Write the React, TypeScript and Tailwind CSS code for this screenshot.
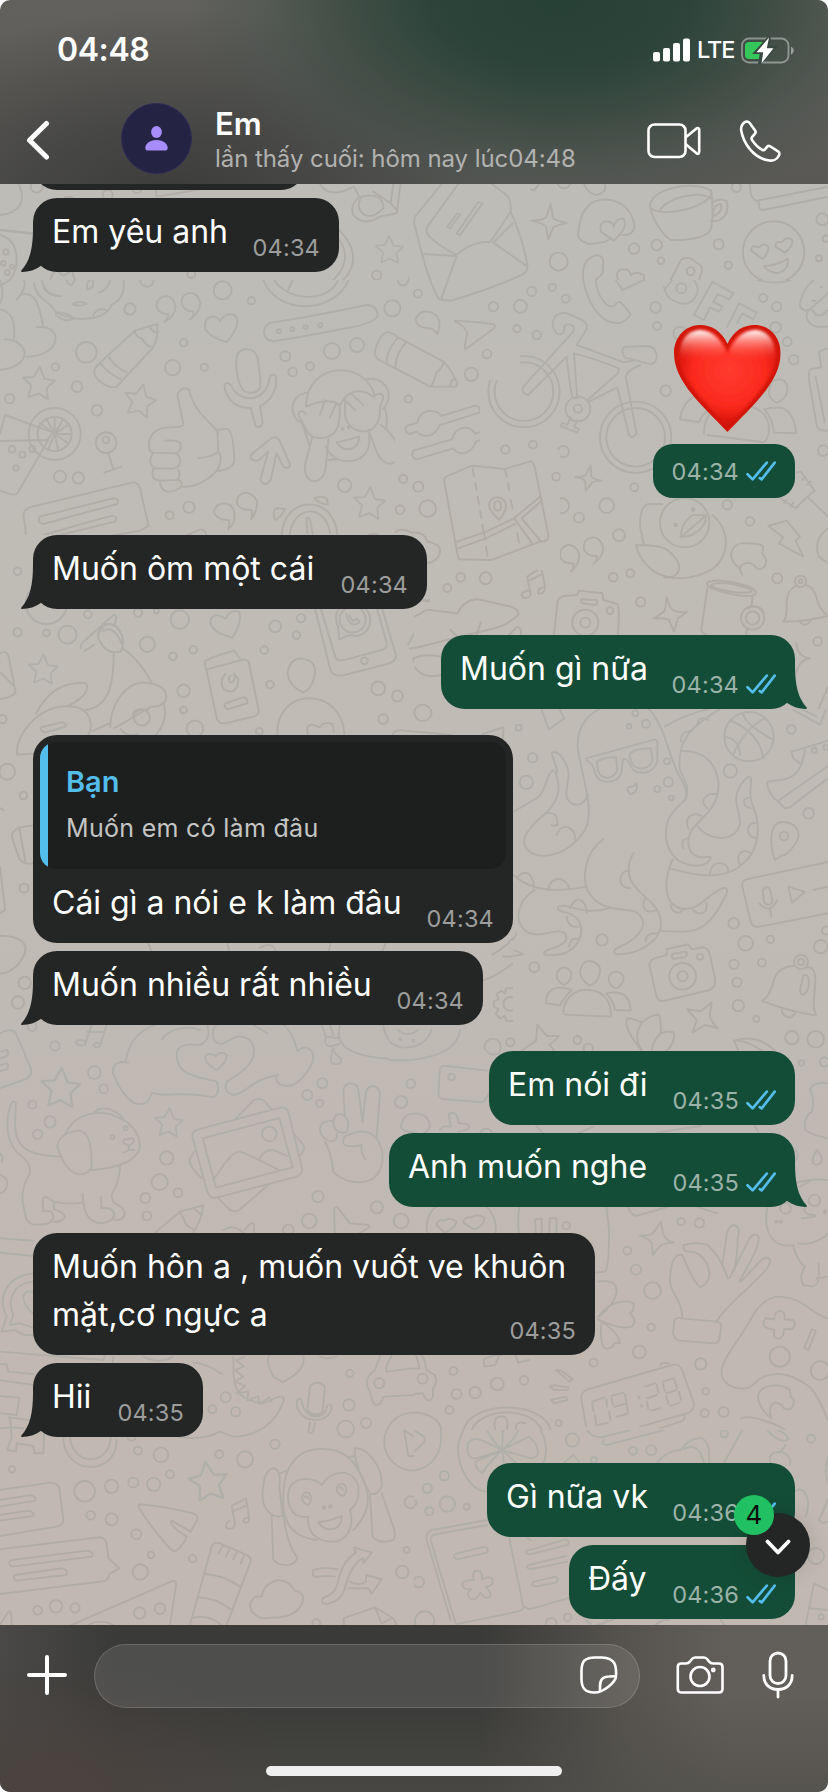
import React from "react";
import clsx from "clsx";

type Dot = [number, number, number];

// Each patch of the wallpaper has its own origin and is drawn at triple size
type Patch = {
  id: string;
  transform: string;
  dots: Dot[];
  stars?: [number, number, number, number][];
  paths: string[];
};

const STAR = "M0 -50 L15 -17 Q17 -14 21 -14 L48 -12 L25 12 L31 46 L2 30 L-28 44 L-22 8 L-48 -14 L-16 -18 Z";

const patches: Patch[] = [
  {
    id: "top-left",
    transform: "translate(0 0) scale(.3333)",
    dots: [
      [110, 560, 18], [323, 585, 15], [411, 568, 12], [1130, 826, 14], [18, 756, 8], [10, 790, 7],
      [36, 800, 6], [22, 818, 7], [574, 822, 12],
    ],
    stars: [[1168, 750, 0.85, 0]],
    paths: [
      "M55 550 C80 600 62 640 0 645", "M0 690 L100 700 M0 705 C60 720 60 800 30 840", "M130 705 L0 690",
      "M150 840 Q165 800 180 820 Q190 835 215 810 L225 840",
      "M465 552 L470 590 L700 552 M195 592 L210 590 L220 594",
      "M960 552 Q985 592 1040 570 L1062 560 L1078 590 Q1046 620 1062 648 Q1095 680 1140 650 L1190 640 L1202 552",
      "M1085 590 Q1065 620 1090 642 Q1115 660 1150 625 Q1150 575 1085 590 M1180 552 L1172 610 L1120 575 M1172 610 L1190 630",
      "M1018 690 Q1095 770 1030 840 M1018 720 Q1060 780 1000 840",
    ],
  },
  {
    id: "top-right",
    transform: "translate(414 0) scale(.3333)",
    dots: [
      [967, 562, 14], [1225, 658, 18], [1236, 716, 10], [1215, 775, 9], [943, 796, 11], [914, 733, 15],
      [728, 735, 16], [741, 782, 10], [660, 746, 16], [434, 785, 27], [830, 814, 12], [450, 545, 20],
      [1079, 756, 92],
    ],
    paths: [
      "M410 612 L418 655 Q422 660 458 669 Q422 678 418 682 L403 718 L396 680 Q390 670 353 662 Q390 660 396 652 Z",
      "M510 552 Q520 580 548 585 Q582 575 572 552 M305 552 L360 572 L374 555",
      "M520 730 Q485 720 494 690 Q502 600 576 598 Q650 605 662 680 Q655 708 625 705 M520 732 Q580 730 590 714",
      "M600 722 L562 696 Q552 665 580 664 Q595 665 600 680 Q605 655 628 656 Q646 680 600 722",
      "M708 615 C715 560 860 540 892 575 C900 620 730 660 708 620 C715 660 750 710 770 720 C830 722 880 710 890 690 Q900 650 892 570",
      "M735 635 C760 590 860 570 890 595 M894 610 Q915 592 938 603 Q950 650 905 664 L890 662 M897 650 Q895 615 920 612 Q930 635 897 650",
      "M1008 552 Q1008 600 1030 602 L1242 560 M1033 602 L1037 625 Q1040 632 1060 628 L1242 590",
      "M1045 777 L1012 752 Q1010 732 1035 742 Q1050 725 1064 742 Q1062 765 1045 777 M1112 758 L1085 740 Q1082 722 1104 727 Q1115 708 1134 718 Q1140 738 1112 758 M1050 798 Q1085 798 1122 776 Q1125 812 1090 820 Q1060 815 1050 798",
      "M508 840 Q500 780 545 766 Q570 765 568 790 L566 820 L545 840 M612 840 Q600 805 635 808 Q650 812 650 826 Q665 810 690 826 L690 840",
      "M770 840 L800 782 Q812 768 830 776 L858 795 Q870 805 860 825 L855 840",
      "M330 800 Q350 790 336 810 L230 870",
    ],
  },
  {
    id: "left",
    transform: "translate(0 280) scale(.3333)",
    dots: [
      [390, 87, 17], [259, 217, 31], [166, 261, 11], [231, 320, 16], [29, 356, 14], [291, 391, 16],
      [551, 188, 11], [518, 263, 23], [613, 262, 11], [668, 31, 27], [754, 62, 11], [1177, 85, 24],
      [856, 229, 15], [878, 276, 13], [930, 259, 12], [996, 213, 24], [1071, 195, 21], [164, 462, 78],
      [164, 462, 51], [318, 488, 31], [318, 480, 10], [180, 590, 18], [235, 594, 17], [36, 508, 10],
      [67, 524, 9], [97, 507, 9], [48, 564, 8], [509, 706, 12], [567, 682, 17], [1034, 616, 20],
      [1210, 597, 13], [1201, 690, 13], [1225, 357, 13], [441, 0, 20], [837, 154, 6], [877, 148, 6],
      [917, 142, 6], [961, 135, 6], [1210, 2, 15], [1028, 446, 3], [1046, 442, 3],
    ],
    stars: [[116, 310, 1, 4], [420, 362, 1, 12], [1108, 670, 0.98, 4]],
    paths: [
      "M102 10 C110 60 150 60 168 98 Q240 130 300 108 Q330 95 334 74 C370 60 372 30 372 0",
      "M125 0 C135 35 150 45 183 49 Q150 50 130 25 M200 0 Q210 30 225 0 M262 28 Q258 5 270 0 M262 28 Q285 25 278 0 M295 38 Q325 30 330 0 M217 72 Q240 60 260 72 Q240 82 217 72 M168 98 Q200 95 222 115 Q195 130 168 105 M280 105 Q295 80 322 92",
      "M50 58 C70 40 80 10 70 0 M65 44 C110 30 120 90 130 140 M110 142 C190 130 190 230 78 230 M0 88 C40 95 45 130 42 178 M15 178 C90 180 100 260 0 270",
      "M0 0 Q15 40 0 70 M0 18 Q20 5 30 0",
      "M283 280 Q282 262 300 248 L405 152 L445 140 L472 132 Q475 180 458 204 L352 318 Q330 330 295 300 Q283 288 283 280",
      "M302 252 Q330 285 362 297 M327 232 Q345 262 380 277 M403 153 Q412 175 425 174 Q435 196 458 203 M448 138 Q458 160 470 155",
      "M493 126 Q525 110 527 80 Q522 48 496 48 Q468 54 470 80 Q478 104 504 102 Q505 115 493 126 M570 118 Q598 100 601 70 Q595 38 570 38 Q542 45 545 70 Q552 96 580 94 Q582 108 570 118",
      "M680 186 Q635 175 616 148 Q610 110 640 110 Q655 112 660 124 Q675 95 704 105 Q728 130 680 186",
      "M790 0 C830 105 1000 105 1046 0 M822 0 C870 70 990 65 1014 0 M862 36 L878 0",
      "M815 128 Q945 108 1100 75 Q1132 75 1133 108 Q1125 132 1010 150 Q900 172 820 184 Q790 180 792 150 Q798 132 815 128",
      "M1242 188 L1170 158 Q1150 150 1135 185 Q1115 225 1135 238 L1242 296 M1195 172 Q1160 210 1160 248 M1220 186 Q1185 225 1186 260",
      "M710 235 C710 200 765 195 773 235 C780 280 785 310 780 325 Q765 345 735 335 C715 320 705 265 710 235",
      "M673 318 Q680 300 695 318 C715 370 800 370 808 295 Q815 275 828 290 C835 340 800 370 780 378 L788 430 Q782 445 768 440 L752 384 C715 385 680 365 673 318",
      "M918 380 C920 240 1100 240 1125 350 M1095 298 C1150 285 1190 340 1150 386 M920 338 C870 345 860 410 910 432 M918 380 Q985 350 1020 375 Q1045 330 1078 334 Q1100 335 1120 350 Q1145 332 1150 352 L1140 385 C1145 480 1040 470 1035 400 L1035 355",
      "M918 402 Q900 382 895 405 L915 440 C930 495 1010 480 1016 430 Q1022 390 1018 375 M975 360 L960 405 M1008 372 L990 412 M1052 340 L1090 375 M1040 365 L1065 390",
      "M937 472 L915 555 C910 620 975 620 978 555 L985 478 M978 500 C1000 560 1100 560 1108 490 L1108 450 M1140 434 C1180 460 1210 510 1192 540 Q1160 570 1132 520 L1105 450 M1010 488 L1078 470 Q1075 510 1035 508 Q1018 500 1010 488 M908 435 L928 495 M985 540 L1010 538 M1155 385 Q1165 420 1158 448",
      "M550 430 L532 345 Q545 315 568 330 C580 400 650 440 655 460 M550 435 Q545 442 500 443 C460 445 445 475 447 495 Q445 515 460 518 M495 482 Q545 480 542 495 Q545 515 525 520 L460 518 Q440 550 465 565 L520 566 Q545 560 540 535 Q535 520 520 520 M460 565 Q450 600 480 602 L530 600 Q545 590 535 570 M480 602 Q480 635 510 635 Q545 630 546 610 Q540 598 530 600 M546 620 C590 625 640 590 655 565 Q670 530 655 515 M595 535 Q640 530 655 515 L652 455 M652 450 L680 446 Q700 448 703 540 Q703 565 655 573",
      "M752 525 Q750 545 775 542 L805 515 L782 595 Q780 612 800 612 L812 600 L830 520 L850 560 Q870 570 870 552 L838 480 Q825 465 810 478 Z",
      "M15 405 L160 458 L140 480 L0 483 M15 405 L0 460 M145 480 L52 640 Q45 650 0 632 M164 462 L164 412 M164 462 L140 418 M164 462 L120 430 M164 462 L190 418 M164 462 L208 432 M164 462 L212 462 M164 462 L205 490 M164 462 L175 510 M164 462 L145 508",
      "M325 520 L340 568 M313 578 L365 560",
      "M75 780 Q80 750 72 720 Q65 690 90 682 L395 608 Q415 605 420 625 L446 738 L420 752 L270 780 M120 710 L340 655 Q360 655 352 672 L130 732 Q108 728 120 710 M130 765 L335 707 Q355 710 345 725 L160 770",
      "M684 748 Q708 730 703 698 Q698 670 670 670 Q640 676 643 700 Q655 722 686 720 Q690 735 684 748 M753 718 Q776 690 770 660 Q755 638 735 638 Q708 645 711 670 Q722 692 755 690 Q758 705 753 718",
      "M845 780 C840 640 1010 640 1012 770 M868 780 C870 670 980 670 990 760 M920 715 Q928 710 932 725 L938 765 M920 715 L922 760 M825 720 Q815 690 830 685 L856 687 Q840 715 825 720 M942 655 Q965 645 980 655 L984 674 Q960 672 942 655",
      "M1242 430 L1215 440 Q1215 465 1235 462 M1105 765 Q1125 755 1140 770 M1185 780 Q1200 750 1242 760 M540 775 L600 748 Q620 750 620 770",
    ],
  },
  {
    id: "middle",
    transform: "translate(330 180) scale(.3333)",
    dots: [
      [140, 289, 15], [219, 300, 16], [264, 341, 12], [187, 385, 24], [490, 380, 14], [572, 379, 20],
      [606, 333, 14], [561, 446, 11], [621, 465, 14], [471, 522, 13], [424, 583, 20], [235, 657, 11],
      [526, 808, 13], [609, 794, 12], [220, 897, 12], [265, 920, 15], [210, 989, 13], [293, 986, 25],
      [45, 916, 20], [679, 890, 12],
    ],
    paths: [
      "M335 12 L255 110 Q250 125 255 140 C270 200 290 290 325 355 Q345 365 370 360 Q500 320 575 285 Q595 275 592 255 Q580 180 542 95",
      "M385 12 L292 140 Q285 155 298 170 Q330 200 380 225 Q420 185 482 185 M485 12 L530 45 Q545 60 542 95 L482 185 M548 130 L490 188 L590 258 M278 222 L380 228 L333 358",
      "M352 140 L382 100 L390 104 L360 146 Z M380 160 L445 66 L457 70 L390 166 Z",
      "M322 462 Q310 445 295 445 Q255 440 258 415 Q268 392 292 395 C330 400 335 430 322 462 M375 422 Q430 425 490 432 Q500 438 490 447 L410 505 Q405 510 404 500 L412 458 Q400 435 375 425",
      "M170 457 Q155 460 145 490 Q130 525 140 535 L300 620 L378 620 L382 610 Q360 560 340 545 L200 470 Q180 455 170 457 M205 472 Q172 505 172 548 M228 488 Q200 515 196 560 M342 545 Q330 575 320 575 Q315 600 303 620 M378 598 Q362 595 360 618",
      "M230 738 L262 728 C270 685 320 685 334 708 L435 677 Q455 680 448 698 L330 735 C310 780 275 770 260 755 L238 762 Q220 755 230 738 M250 812 L365 778 C380 735 420 735 436 762 L460 752 Q478 760 468 775 L438 785 C420 830 380 825 370 805 L260 838 Q240 832 250 812",
      "M348 890 L425 857 L525 867 L600 844 Q610 845 614 860 L656 1070 Q655 1085 630 1085 L485 1140 L388 1138 Q384 1135 380 1110 L343 905 Q342 895 348 890",
      "M428 865 L432 888 M436 908 L440 930 M443 950 L447 972 M450 992 L454 1014 M457 1034 L460 1055 M468 1100 L472 1128 M525 867 L530 890 M534 910 L538 932 M542 960 L548 985 M562 1060 L567 1088",
      "M380 1085 L462 1058 L552 1015 L630 950 M384 1105 L466 1076 L556 1032 M462 1058 L466 1078 M553 1015 L605 1088 M575 1015 L634 1085 M575 1015 L632 965",
      "M508 1020 Q475 990 477 972 Q485 950 505 952 Q530 958 528 980 Q525 1000 508 1020 M503 970 m-9 8 a10 10 0 1 0 18 0 a10 10 0 1 0 -18 0",
      "M190 1060 Q215 1040 245 1058 Q285 1055 292 1085 Q345 1095 325 1130 Q315 1145 292 1150",
    ],
    stars: [[118, 970, 1, 4]],
  },
  {
    id: "bicycle",
    transform: "translate(414 280) scale(.3333)",
    dots: [
      [320, 79, 19], [238, 80, 13], [353, 34, 14], [415, 22, 11], [455, 56, 12], [12, 40, 12], [309, 146, 11],
      [368, 165, 13], [219, 223, 13], [172, 283, 20], [725, 82, 16], [729, 138, 12], [798, 160, 20], [1048, 54, 12],
      [1088, 80, 14], [1085, 142, 16], [1120, 185, 13], [1139, 239, 14], [755, 332, 16], [330, 335, 107],
      [330, 335, 88], [665, 472, 107], [665, 472, 88], [492, 387, 37], [492, 386, 12], [274, 508, 12],
      [357, 494, 12], [448, 515, 17], [426, 589, 11], [661, 622, 12], [442, 677, 23], [578, 677, 22],
      [495, 713, 15], [615, 766, 18], [940, 674, 14], [1008, 724, 13], [598, 892, 13], [649, 880, 12],
      [680, 966, 14], [140, 892, 13], [215, 895, 18], [100, 924, 12], [1090, 895, 15], [1211, 1084, 13],
      [26, 1299, 25], [12, 620, 15], [40, 686, 26], [812, 728, 74], [837, 689, 4], [785, 735, 4], [514, 1028, 39],
      [514, 1028, 15], [588, 992, 10], [1016, 1014, 35], [1016, 1014, 20], [1160, 904, 17], [1160, 904, 6],
      [665, 1301, 9], [698, 1331, 11], [643, 1341, 8], [1228, 512, 16], [802, 25, 15], [866, 1326, 14],
    ],
    paths: [
      "M50 0 L78 58 Q85 65 105 62 L260 10",
      "M508 0 C520 70 560 130 610 130 Q630 130 650 105 Q640 85 618 66 Q610 65 600 78 Q585 85 570 65 Q550 45 545 0",
      "M605 0 L625 30 L690 0 M755 25 L775 0 M750 20 Q755 55 785 65 Q830 85 850 40 Q855 20 840 0 M840 105 L895 5 L958 40 L945 58 L912 42 L898 65 L925 80 L915 95 L888 82 L870 120 Z M940 140 L975 70 L1028 98 L1018 118 L985 100 L970 128",
      "M1030 0 Q1085 15 1130 0 M1200 0 Q1170 20 1158 70 Q1155 85 1175 92 M1242 40 L1180 95 Q1170 125 1205 140 L1242 140 M1175 92 Q1195 80 1205 105 L1225 105 L1242 90 M1195 62 L1205 62 M1220 22 L1225 20",
      "M432 163 Q415 150 416 125 Q425 95 460 100 L505 120 Q522 130 518 148 L488 195 L630 247 L665 240 M432 163 Q455 165 450 140 Q460 125 480 140 L478 155 L328 320 Q320 340 342 345 L458 230 Q465 300 475 355 M480 220 L490 355 L475 355 M480 220 Q540 235 615 265 L612 280 L520 360 M525 365 L610 322 L645 465 Q655 480 668 460 L635 290 Q640 270 680 255 M625 212 Q625 198 645 200 L700 198 Q728 200 728 235 Q722 258 700 250 L632 232 Q625 222 625 212 M470 410 L460 435 L445 428 L440 438 L490 458 L495 448 L480 440 L490 420",
      "M870 460 C870 400 905 375 965 375 C1030 375 1065 400 1065 450 Q1060 490 1045 486 L880 465 M798 418 Q805 365 850 345 M798 418 L855 427 Q865 400 885 392 M1050 388 Q1080 380 1105 384 C1140 400 1145 440 1147 460 L1080 458 Q1075 410 1050 388 M1065 340 Q1065 300 1095 298 C1130 300 1130 350 1090 368 Q1068 360 1065 340",
      "M1242 205 L1215 215 L1222 262 L1190 268 Q1183 275 1185 300 L1208 435 Q1212 455 1242 452 M1205 290 L1232 425",
      "M530 557 L532 590 Q540 598 562 602 Q540 602 533 610 L515 632 L514 605 Q505 592 484 592 Q510 590 515 585 Z",
      "M470 875 Q500 850 495 820 Q485 793 460 795 Q432 805 440 835 Q450 852 478 850 Q480 865 470 875 M538 852 Q570 830 567 800 Q558 770 532 772 Q505 780 510 808 Q520 830 548 828 Q550 845 538 852",
      "M745 672 L700 673 Q678 680 678 740 L690 795 M895 705 C960 760 940 850 880 875 C840 895 790 900 760 890 C700 880 670 820 666 795 Q740 795 760 810 Q810 850 790 880 Q780 895 750 892 M800 770 Q805 720 840 705 L875 706 Q880 740 835 765 Q818 772 800 770 M870 712 L800 772",
      "M985 885 Q980 865 965 855 C935 820 960 785 1000 790 Q1040 790 1048 800 L1045 822 Q1065 840 1050 862 Q1030 875 1020 855 Q1000 840 980 858 Q975 870 985 885",
      "M1063 738 L1118 722 L1158 770 L1145 782 L1168 830 L1095 790 L1108 772 Z",
      "M1148 578 L1160 575 L1202 632 L1180 650 L1242 710 M1100 655 L1145 685 L1180 650 M1165 600 L1175 590 M1178 615 L1190 605 M1110 670 L1118 660 M1130 680 L1138 668 M1242 745 Q1195 780 1215 830 L1242 850",
      "M350 932 Q330 930 322 945 Q335 965 350 945 L340 890 L382 862 L393 920 Q370 925 372 940 Q392 945 393 920 M340 905 L385 882",
      "M420 1065 L430 970 Q432 950 450 948 L490 945 L495 932 L565 940 L568 960 L610 972 Q618 980 612 1065 M502 958 L548 960 Q555 975 540 975 L505 970 Q498 962 502 958",
      "M758 952 L770 985 Q785 1000 820 996 L792 1015 L780 1055 L765 1020 Q750 1012 720 1016 L750 995 Q755 985 758 952",
      "M878 910 Q900 890 1000 918 Q1030 930 1025 942 C1000 960 880 930 878 910 M892 915 C920 900 1010 920 1014 935 C990 945 900 930 892 915 M880 925 L862 1050 Q865 1065 900 1070 M1016 950 L1012 980 M1000 1045 L995 1070 M1000 985 Q1040 970 1050 1000",
      "M1145 918 Q1115 935 1118 975 Q1120 1010 1108 1025 Q1180 1025 1240 1008 Q1215 985 1208 955 Q1200 920 1175 915 M1158 1026 Q1175 1045 1192 1020",
      "M0 1010 L22 1000 Q35 985 60 992 L130 1000 Q150 960 190 957 L290 980 Q320 992 312 1005 C290 1030 260 1040 230 1048 L0 1105 M110 1050 L130 1070 M200 1028 L188 1065 M285 1065 L310 1040 Q325 1045 320 1070 M0 1135 Q30 1120 80 1130 M80 1185 Q30 1200 0 1160 M0 965 L45 960",
      "M1147 1090 Q1150 1130 1188 1135 Q1155 1140 1147 1180 M1160 1260 L1195 1330 L1242 1220",
      "M940 1350 C920 1300 1060 1270 1078 1350 M975 1300 Q1010 1320 1010 1350 M1040 1300 L1000 1330 M500 1350 C520 1280 700 1250 740 1350 M740 1350 Q830 1300 940 1290 M850 1330 Q870 1300 890 1315 M170 1290 Q180 1300 195 1285 M385 1290 L408 1345 L450 1315 L440 1285",
      "M60 765 Q90 790 60 840 Q50 850 38 852 M0 955 L45 965",
    ],
  },
  {
    id: "center-left",
    transform: "translate(0 500) scale(.3444)",
    dots: [
      [492, 44, 11], [549, 21, 17], [51, 207, 11], [51, 384, 12], [135, 386, 10], [196, 391, 26], [255, 332, 11],
      [401, 327, 12], [454, 322, 7], [522, 347, 27], [428, 419, 22], [502, 454, 11], [561, 435, 11], [799, 367, 17],
      [874, 343, 12], [861, 393, 11], [767, 436, 11], [784, 536, 11], [533, 554, 18], [533, 610, 10], [566, 664, 24],
      [1098, 547, 20], [1154, 569, 16], [1113, 636, 14], [1228, 617, 25], [1338, 225, 14], [1411, 226, 18],
      [1299, 256, 12], [1058, 467, 10], [1024, 347, 38], [1507, 661, 9], [1546, 749, 14],
      [1529, 820, 18], [68, 858, 11], [21, 789, 23], [70, 1127, 13], [72, 1402, 18], [52, 1459, 18], [7, 636, 12],
      [412, 632, 23], [753, 672, 10], [1482, 1463, 20], [1551, 1357, 14], [93, 1530, 14], [135, 300, 60],
    ],
    stars: [[125, 492, 0.88, 2]],
    paths: [
      "M675 400 L640 388 Q605 370 612 345 Q625 325 655 345 Q670 315 694 325 Q705 350 675 400",
      "M915 317 L960 495 Q970 515 1000 508 L1130 475 Q1155 465 1148 445 L1110 317 M932 317 L975 460 Q985 470 1010 462 L1110 435 Q1128 428 1122 410 L1095 317 M985 405 L982 370 C960 320 1000 290 1040 300 C1090 320 1085 390 1035 395 L1015 392 Z M1005 330 Q1015 375 1045 355 L1035 345 L1025 352 Q1018 345 1015 335",
      "M595 470 Q600 460 680 437 L700 465 M595 475 L630 635 Q635 650 655 648 L740 628 Q755 620 750 605 L722 470 Q715 460 700 465 L600 492 M655 590 L705 573 Q722 575 718 590 L660 608 Q648 600 655 590 M655 505 Q635 525 650 550 Q690 570 692 520 L680 505 Q685 530 668 530 Q660 515 670 510",
      "M835 505 Q840 460 875 460 Q920 465 914 505 Q905 555 878 558 Q840 540 835 505",
      "M805 682 C800 540 995 540 1000 682 M895 682 Q885 655 905 652 L928 660 Q940 642 965 650 L970 675",
      "M235 430 Q230 420 250 405 L330 333 Q345 335 330 365 M285 385 Q300 350 335 365 Q370 400 350 440 Q310 450 290 410 Q275 390 300 370 M300 380 Q330 360 355 420 M330 445 C330 550 310 600 250 610 M355 430 C400 460 430 510 438 527 M275 420 L245 438",
      "M105 620 C135 560 180 525 250 532 C265 560 220 590 190 600 M50 740 C40 690 110 590 210 600 C260 600 280 660 250 690 M50 740 L110 735 M120 660 L180 645 Q200 650 185 660 L130 675 Q115 670 120 660",
      "M320 660 C320 600 360 530 420 530 Q480 535 483 570 Q480 600 440 600 C400 620 360 650 330 662 M385 630 Q385 600 430 610 M350 665 Q370 690 400 680 M475 590 Q490 640 450 685 M270 670 L320 648",
      "M0 445 Q20 435 25 455 L45 555 Q45 570 0 578 M0 500 L40 540",
      "M1185 420 C1210 370 1240 320 1275 322 L1330 330 C1350 290 1375 280 1400 292 L1500 322 Q1510 335 1490 350 Q1440 385 1390 385 L1190 432 M1300 380 L1310 392 M1395 352 L1388 385 M1282 392 Q1230 390 1215 400 M1282 530 Q1200 490 1200 460 Q1210 445 1282 460 M1475 392 L1495 370 L1515 392",
      "M1140 682 Q1145 665 1180 670 L1310 682 M1400 680 L1462 660 L1460 700",
      "M1568 860 L1500 940 M1568 890 C1500 980 1520 1020 1568 1040 M1568 1130 C1490 1170 1500 1230 1568 1260 M1502 1100 Q1530 1060 1550 1110 L1540 1135",
      "M97 945 Q30 950 35 980 L55 1040 Q65 1060 97 1055 M55 950 L75 1055 M0 895 L10 900 M0 1065 L15 1190 L0 1200 M0 1265 C60 1265 90 1290 65 1330 C50 1360 20 1375 0 1375",
      "M1568 1310 Q1540 1340 1490 1345 Q1430 1390 1400 1395 M1430 1320 Q1480 1290 1500 1258 Q1495 1290 1520 1315 Q1480 1330 1460 1325",
      "M1470 1418 L1494 1418 L1497 1432 L1510 1426 L1525 1440 L1518 1455 L1532 1462 L1532 1478 L1518 1483 L1522 1500 L1508 1508 L1497 1500 L1490 1513 L1470 1512 L1466 1498 L1452 1506 L1440 1492 L1447 1478 L1434 1470 L1434 1455 L1448 1450 L1442 1435 L1455 1425 L1466 1432 Z",
      "M430 1286 L440 1310 M660 1286 L665 1310 M755 1300 Q790 1280 800 1310 M960 1286 L955 1310 M1120 1286 L1110 1310",
      "M500 105 L590 85 Q600 90 600 105 M1150 1524 Q1150 1568 1210 1568 Q1250 1560 1250 1524 M1020 1568 L1060 1540 Q1090 1530 1110 1524",
    ],
  },
  {
    id: "octopus",
    transform: "translate(480 690) scale(.3333)",
    dots: [
      [807, 140, 74], [934, 118, 13], [751, 243, 20], [986, 370, 16], [912, 438, 13], [561, 214, 9], [565, 276, 14],
      [532, 297, 9], [574, 324, 7], [498, 101, 12], [447, 109, 7], [466, 70, 9], [158, 203, 14], [139, 277, 20],
      [116, 113, 9], [366, 750, 17], [163, 832, 15], [761, 700, 16], [797, 760, 22], [871, 748, 11], [1022, 770, 20],
      [762, 823, 14], [846, 818, 12], [771, 877, 14], [775, 947, 17], [829, 987, 9], [936, 1043, 20], [1007, 1048, 25],
      [608, 859, 40], [608, 859, 15], [660, 800, 9], [963, 816, 21], [963, 816, 9], [38, 1070, 24], [91, 1057, 12],
      [292, 1050, 12], [325, 1075, 14], [1038, 722, 12], [1003, 181, 8], [1038, 172, 8],
    ],
    paths: [
      "M360 56 C290 90 285 160 300 210 C320 310 340 370 315 420 C270 490 200 510 155 490 C110 460 140 420 180 385 C250 330 240 280 225 245 Q215 235 205 260 C190 300 185 320 160 330 Q120 355 100 365",
      "M505 56 C560 110 565 210 605 270 Q625 310 618 325 C590 360 555 370 558 440 C565 520 640 540 680 520 Q700 500 685 500 C640 510 615 480 630 430 C650 385 715 370 716 280 C710 220 670 180 605 183",
      "M720 56 C640 110 590 140 600 240 L622 290 Q620 330 610 335 M555 110 Q610 75 690 56 M650 405 C690 460 770 455 780 400 C780 360 755 330 780 290 Q800 255 812 262 C820 280 800 310 820 350 C840 400 840 470 800 510 C740 580 640 555 570 535",
      "M215 190 C225 220 240 260 225 245 M215 190 Q225 180 240 195 C300 260 230 310 275 340 Q305 355 325 315",
      "M370 448 C310 490 300 580 335 620 C370 665 440 655 465 665 C510 690 490 740 420 770 Q390 785 410 793 C480 795 540 750 543 705 C545 650 500 630 465 590 C440 560 440 520 462 488",
      "M578 508 C550 570 550 640 600 655 C660 670 690 600 735 593 Q750 600 730 630 C680 730 640 730 543 722",
      "M100 555 C160 610 240 605 318 590 M165 600 C110 630 100 700 140 725 C180 750 230 710 255 730 C270 760 240 765 200 782 Q180 795 210 795 C290 800 320 730 295 690 Q280 670 245 665 Q220 650 250 647 C300 660 340 670 385 655",
      "M603 155 Q600 125 635 122 M653 105 Q655 75 685 90 M682 355 Q655 330 690 312 L712 312 M625 417 Q610 375 650 372 L665 378 M610 475 Q600 450 622 445 M780 525 Q765 490 795 482 L812 490 M690 550 Q695 515 725 520 Q745 525 745 545 M830 445 Q800 440 805 412 Q815 395 828 400 M812 355 Q790 350 792 330 L805 322",
      "M205 370 Q235 365 232 405 Q220 410 215 405 M230 435 Q240 405 265 412 Q290 425 285 450 M112 565 Q120 545 145 550 Q165 570 160 595 M205 600 Q210 565 240 567 Q265 575 268 598 M270 655 Q285 620 305 632 Q320 645 320 668 M260 680 Q265 715 295 710 M268 770 Q270 740 298 748 M450 595 Q415 590 423 560 Q430 540 450 542 M495 625 Q480 660 510 665 L530 660 M497 755 Q495 730 530 730 M572 645 Q575 670 600 668 L612 655 M640 660 Q660 680 678 662 L680 640",
      "M318 205 L525 148 Q535 150 532 175 L532 215 C520 255 465 260 450 225 Q440 200 428 210 L425 245 C415 285 355 285 345 250 Q340 220 320 212 Z M350 215 Q375 200 408 202 L412 240 C400 270 365 270 355 245 Z M448 195 Q460 175 512 175 L518 210 C505 245 465 240 455 218 Z",
      "M470 280 Q475 310 450 312 Q438 300 445 292 Q462 290 470 280",
      "M750 90 Q840 130 850 205 M736 140 Q780 150 780 195 M855 85 Q800 110 760 192 M790 68 Q790 100 880 150",
      "M935 185 L1044 152 M935 188 L940 205 L962 222 Q975 200 975 172 M970 200 C960 270 910 270 862 275 Q860 310 900 340 L915 355 L930 352 L1044 265 M898 330 L1044 228",
      "M885 510 C870 470 865 400 905 396 C950 395 965 430 950 455 Q925 495 905 497 Z",
      "M1044 516 L800 568 Q785 572 787 590 L812 695 Q820 715 840 710 L1044 670 M848 600 Q865 580 872 605 L878 635 Q865 655 852 635 Z M838 640 Q870 675 892 630 M870 655 L874 680 M925 590 L974 606 L936 638 Z M1000 600 L1044 590",
      "M508 825 Q510 808 530 803 L560 795 L560 778 L625 763 L635 778 L670 772 Q685 775 690 795 L706 870 Q708 890 690 900 L550 933 Q535 935 530 920 Z M578 792 L618 785 Q625 795 615 802 L580 807 Q572 800 578 792",
      "M940 828 Q895 830 882 870 Q870 920 846 933 Q930 965 1008 977 C990 930 1015 890 1003 845 Q990 825 975 835 M905 960 Q910 985 935 982 L945 970 M970 857 Q985 850 986 870 Q990 905 968 915 Q955 910 965 880 Z",
      "M230 858 Q230 835 255 832 Q280 840 272 865 Q262 885 250 884 Q232 875 230 858 M300 845 Q305 812 330 813 Q365 820 360 850 Q350 885 328 886 Q302 870 300 845 M386 870 Q385 848 408 845 Q435 850 430 872 Q420 895 405 895 Q388 885 386 870",
      "M250 970 C250 920 290 895 330 900 C380 905 395 945 392 980 L255 974 M275 900 Q200 875 198 940 L240 946 Q250 925 275 900 M378 910 Q450 895 452 962 L405 960 Q400 930 378 910",
      "M695 938 L690 975 Q690 990 712 1015 L675 1005 L638 1027 L650 990 L622 958 L662 964 Z",
      "M485 1082 C460 1050 430 1010 442 985 Q460 985 485 998 Q520 970 538 975 Q545 1010 542 1030 Q565 1020 582 1028 Q585 1060 560 1082 M485 998 C460 1040 475 1060 485 1082 M542 1030 Q520 1050 515 1082",
      "M125 1082 L168 1052 L172 1004 L200 1038 L236 1038 Q220 1060 208 1062 L222 1082",
      "M762 1052 Q830 1030 885 1082 M775 1082 L762 1052 Q800 1050 845 1082 M185 60 L207 118 L253 85 L240 60 M30 130 L70 112 L68 160",
      "M110 730 Q100 755 75 775 Q110 780 130 792 Q100 800 70 798 Q40 850 0 855 M0 795 Q35 790 35 808 L0 815",
      "M940 60 L1020 104 L1044 40 M970 60 L1010 80",
    ],
  },
  {
    id: "puppy",
    transform: "translate(0 1020) scale(.3333)",
    dots: [
      [165, 78, 14], [283, 158, 19], [311, 206, 13], [97, 254, 12], [150, 306, 17], [113, 343, 14], [96, 20, 13],
      [500, 414, 20], [479, 486, 24], [436, 534, 15], [534, 518, 13], [441, 588, 13], [808, 342, 22], [967, 190, 15],
      [922, 225, 15], [959, 250, 11], [1203, 246, 19], [954, 530, 17], [928, 603, 22], [1131, 562, 18],
      [1203, 602, 23], [865, 630, 16], [337, 352, 6], [377, 325, 6], [1230, 190, 12], [1173, 28, 3], [1201, 57, 3],
    ],
    stars: [[182, 204, 1.22, 3], [506, 308, 0.88, 4]],
    paths: [
      "M0 40 Q35 22 48 40 L94 150 Q95 170 75 178 L0 204 M0 95 L20 90 Q30 98 20 108 L0 115 M0 135 L20 130 Q30 138 20 148 L0 153",
      "M258 65 Q240 55 226 66 Q235 80 255 75 L275 14 M303 72 Q285 62 280 76 Q292 88 300 78 L320 14 M262 35 L312 35",
      "M465 14 C400 40 385 80 377 125 M384 128 Q340 118 338 158 C350 190 375 235 405 250 Q445 262 455 218 C490 235 540 210 640 232 Q662 220 650 185 C600 170 530 170 530 105 C530 75 560 70 600 75 Q635 60 622 14 M485 58 C510 25 560 15 600 30",
      "M650 14 C635 30 630 70 665 72 C700 60 710 35 750 60 C785 110 740 150 680 185 Q668 215 700 225 C740 220 760 175 835 165 M830 165 C820 200 870 210 900 180 C930 150 950 120 935 95 Q915 70 892 95 C885 60 870 30 850 14 M760 14 L802 40",
      "M650 150 Q615 130 615 110 Q625 95 648 108 Q665 90 680 105 Q680 130 650 150",
      "M990 14 L1000 45 M965 14 L978 50 Q970 75 990 80 L1018 72 M980 50 L1015 55 M1018 40 C1015 90 1080 120 1242 118 M1020 14 L1015 50 M1000 85 Q985 125 1000 132 Q1030 135 1022 115 Q1000 100 1000 85 M1150 14 C1155 65 1190 85 1242 85 M1185 14 Q1200 50 1242 46",
      "M180 410 C90 405 45 390 45 310 L48 250 Q40 235 30 260 C10 330 30 380 60 405 C95 430 90 450 90 460 C60 510 65 540 75 580 C80 615 100 618 140 612 Q170 600 155 575 L130 573 L128 540 Q130 520 160 545 Q210 555 250 548",
      "M195 345 C220 280 300 265 350 290 C400 310 425 350 418 390 C400 430 340 445 275 450 M172 380 C175 350 200 335 240 332 C270 340 275 380 275 440 Q265 465 235 463 C200 455 180 410 172 380 M285 275 Q310 255 350 278 Q370 290 368 298",
      "M248 522 C250 580 265 605 300 610 Q345 605 342 580 Q335 560 305 565 L302 530 M360 435 C360 490 340 510 335 525 Q335 550 355 555 Q380 570 372 590 Q360 605 340 598 M162 550 L162 568 Q190 575 195 590 Q190 605 162 606",
      "M386 378 L370 368 Q368 355 385 358 Q400 350 402 362 Q398 372 386 378 L388 390 L372 398 M388 390 L402 390",
      "M577 350 Q575 335 595 328 L845 262 Q862 262 866 280 L906 445 Q908 462 890 470 L650 533 Q630 538 622 515 Z M608 355 L838 294 L878 442 L648 503 Z",
      "M640 480 C680 420 700 395 720 395 Q750 405 840 452 M780 415 Q790 390 820 390 L862 408 M705 298 L760 242 Q780 230 795 245 L815 268 M885 345 L910 375 Q918 390 900 405 M582 395 L568 420 Q568 440 605 475 M655 535 L690 570 Q710 578 720 568 L805 495",
      "M1035 290 L1030 210 Q1035 190 1055 190 Q1075 195 1075 210 L1088 308 L1098 215 Q1105 198 1120 198 Q1138 202 1140 220 L1130 355 M1000 310 C1000 270 1040 275 1045 310 L1042 335 Q1020 345 1005 325 Q1000 318 1000 310 M998 303 Q960 300 960 330 C965 360 990 365 1000 363 Q1015 355 1010 340 M1045 345 Q1100 320 1130 355 C1160 400 1150 450 1120 475 C1080 500 1020 480 1000 455 Q995 400 975 365 M1045 345 Q1025 350 1030 370 Q1040 385 1085 375 Q1080 395 1096 418",
      "M465 638 L540 575 L610 556 Q605 600 580 638 M540 575 Q545 590 552 596 Q555 620 582 628 M580 565 L603 582 M670 630 Q700 610 730 638 M735 630 Q755 600 762 615 L762 638 M1005 638 L1002 570 Q1010 550 1022 575 L1050 610 L1105 615 Q1115 622 1080 638",
      "M0 465 Q20 470 22 490 Q20 515 0 520 M0 400 Q12 410 5 425 M1242 285 Q1205 290 1210 330 L1220 345",
    ],
  },
  {
    id: "right-lower",
    transform: "translate(300 1030) scale(.3367 .3333)",
    dots: [
      [450, 141, 10], [300, 216, 18], [329, 161, 13], [66, 161, 12], [22, 193, 14], [59, 220, 8], [53, 499, 16],
      [229, 531, 18], [28, 573, 22], [300, 573, 22], [575, 50, 24], [625, 38, 12], [824, 30, 12], [858, 54, 14],
      [1460, 25, 20], [1530, 28, 25], [1489, 99, 8], [1558, 96, 14], [1132, 575, 11], [1186, 579, 14], [972, 662, 12],
      [998, 719, 15], [1047, 782, 25], [1043, 892, 11], [1008, 966, 19], [872, 998, 12], [1190, 1002, 17],
      [1205, 1084, 10], [1202, 1150, 12], [1258, 1146, 15], [1425, 980, 30], [1545, 1022, 28], [236, 1060, 15],
      [364, 1046, 15], [456, 1023, 12], [148, 1030, 10], [146, 1125, 17], [197, 1178, 17], [137, 1200, 25],
      [465, 1092, 15], [520, 1088, 17], [586, 1062, 19], [665, 1051, 13], [444, 1140, 12], [768, 1179, 9],
      [791, 587, 11], [1528, 511, 17], [1442, 535, 16], [1415, 575, 3], [1428, 575, 3], [1560, 545, 4], [298, 28, 3], [337, 32, 3],
    ],
    paths: [
      "M415 120 Q420 105 435 108 L555 122 M415 125 L411 195 Q412 205 430 208 L540 217 Q552 212 560 190",
      "M345 308 Q290 305 302 280 Q310 250 345 250 Q385 255 385 290 Q380 305 370 308 M415 300 L425 290 L448 290 L442 255 Q455 240 465 255 L472 280 L495 282 Q512 290 495 298 L470 305 M535 308 Q550 285 570 305",
      "M105 608 L103 540 Q108 525 120 540 L148 580 L200 588 Q215 592 185 608 M378 608 C370 570 390 540 405 530 M555 530 C580 560 585 590 580 608 M430 608 L405 585 Q408 565 430 572 Q445 560 465 575 Q462 595 430 608 M515 598 L485 578 Q485 560 510 562 Q530 548 548 565 Q545 590 515 598",
      "M652 530 Q645 570 650 608 M910 530 L918 600 Q918 720 905 725 L880 728 M700 608 L698 568 L718 566 L718 608 M740 608 L742 565 L762 565 L762 608",
      "M885 755 Q945 745 940 790 Q930 830 885 862 C910 820 965 805 990 820 Q995 845 978 850 Q1005 870 985 890 Q950 900 885 868 Q950 910 950 940 L935 938 Q925 960 905 955 Q890 940 895 880",
      "M1072 575 L1078 610 Q1085 630 1110 638 Q1080 638 1068 650 L1048 675 L1045 640 Q1035 625 1008 617 Q1040 618 1050 608 Z M975 531 Q985 565 1010 555 L1090 531 M1180 531 L1240 550",
      "M1135 862 C1135 800 1090 790 1100 730 C1105 690 1115 670 1135 675 C1160 730 1170 760 1190 772 Q1230 750 1208 700 Q1185 660 1150 665 Q1135 660 1140 645 Q1180 635 1210 645 Q1250 680 1270 745 M1255 700 L1268 610 Q1275 585 1290 585 Q1310 592 1300 625 Q1300 670 1290 720 M1275 745 L1335 625 Q1350 605 1362 620 Q1365 640 1345 680 L1305 755 M1310 755 L1370 690 Q1390 675 1397 690 Q1395 710 1370 735 C1330 780 1270 820 1235 878 M1112 870 Q1120 860 1140 866 L1240 875 Q1255 880 1250 900 L1245 930 Q1240 942 1225 940 L1125 932 Q1110 925 1108 908 Z",
      "M1568 865 C1510 850 1500 800 1415 800 C1360 810 1340 870 1320 900 C1280 960 1240 1010 1255 1045 C1275 1080 1330 1085 1350 1060 C1380 1025 1440 1025 1480 1050 C1530 1070 1540 1110 1568 1170",
      "M1412 850 Q1425 835 1438 850 L1440 868 L1465 870 Q1475 885 1462 898 L1438 897 L1435 915 Q1425 935 1408 920 L1408 900 L1382 892 Q1372 880 1382 865 L1408 868 Z M1520 898 L1532 902 L1510 960 L1498 953 Z",
      "M1360 1100 C1365 1060 1430 1060 1455 1080 L1458 1102 Q1475 1110 1460 1135 Q1440 1145 1430 1125 Q1400 1105 1395 1145 L1400 1165 Q1365 1140 1360 1100",
      "M1465 645 C1380 660 1370 560 1400 500 M1400 500 Q1470 440 1568 450 M1480 640 C1520 650 1560 620 1568 610 M1465 648 Q1480 700 1500 710 Q1480 740 1495 765 L1522 770 Q1545 760 1535 745 L1568 740 M1540 700 L1542 735 M1500 520 Q1490 555 1525 555 Q1545 560 1490 565 M1485 470 L1520 450",
      "M1568 160 Q1530 155 1515 175 Q1530 210 1520 245 Q1495 260 1500 300 Q1520 315 1568 325 M1535 360 Q1510 400 1535 405 Q1565 395 1535 360 M1472 360 Q1485 375 1472 390",
      "M1290 30 Q1350 20 1412 64 M1302 60 L1290 30 Q1340 35 1380 64 M970 0 C975 30 990 55 1010 64 M1020 50 Q1045 10 1040 0 M1015 50 Q1090 60 1110 10 L1080 5 M1165 5 L1175 0 M660 50 L695 25 L690 0 M715 20 L770 18 L740 45 L745 64 M660 50 L665 64",
      "M75 0 L70 40 Q100 55 115 40 L120 15 M100 55 Q80 95 105 105 Q135 95 100 55 M115 20 C120 80 240 95 330 90 C420 80 470 50 475 0 M245 0 C260 70 370 70 390 0 M290 0 Q320 25 350 0 M0 50 Q50 50 38 85 Q25 120 0 135",
      "M133 270 L130 180 Q138 160 155 160 Q165 165 168 185 L185 280 L195 185 Q205 168 220 168 Q235 175 235 195 L230 330 M100 285 Q105 248 135 260 Q150 280 145 310 Q115 325 105 305 Z M98 275 Q55 270 60 305 Q75 335 100 333 Q115 320 108 310 M145 325 Q190 285 230 330 C265 380 240 430 215 445 C170 465 120 455 100 425 Q95 370 75 330 M145 325 Q120 325 128 345 Q150 355 185 343 Q175 365 193 388",
      "M215 975 L212 1035 Q190 1050 200 1080 L215 1095 L218 1120 Q230 1135 243 1120 L245 1100 L365 1090 L372 1105 Q385 1120 395 1100 L395 1075 Q410 1060 400 1035 L375 1020 Q370 980 360 975 M243 985 L237 1025 L355 1015 L345 975 M548 1010 L545 990 Q560 975 600 975 M548 1010 L580 1005 L590 980 M640 975 L648 998 L680 990",
      "M25 1130 L30 1080 Q40 1055 60 1058 Q80 1065 73 1090 L65 1135 Q50 1150 35 1145 Z M10 1110 Q-5 1130 20 1155 L50 1170 Q90 1160 95 1130 L85 1125 M30 1165 L28 1200 M42 1170 L40 1200",
      "M760 1020 L775 1022 L810 1048 L800 1055 Z M742 1070 L755 1066 L798 1072 L795 1080 L755 1080 Z M745 1110 L790 1100 L795 1110 L755 1120 Z",
      "M835 1105 Q835 1085 855 1078 L1105 1005 Q1125 1000 1135 1020 L1170 1120 Q1172 1140 1150 1150 L1010 1190 M835 1105 L850 1190 M1070 1005 Q1075 995 1095 1000 M1140 1155 Q1150 1165 1130 1175 L1070 1195",
      "M868 1115 L905 1102 M868 1120 L872 1145 M910 1108 L912 1130 M876 1155 L880 1185 M885 1185 L915 1178 M918 1145 L922 1170 M925 1098 L960 1088 M925 1105 L930 1125 M935 1130 L965 1122 M965 1092 L975 1150 M940 1160 L970 1152 M1005 1100 L1008 1105 M1012 1125 L1016 1130 M1025 1070 L1055 1060 M1060 1065 L1064 1088 M1030 1105 L1060 1095 M1030 1115 L1035 1138 M1042 1142 L1070 1135 M1078 1055 L1110 1045 M1078 1062 L1083 1082 M1112 1050 L1120 1075 M1088 1090 L1118 1080 M1088 1098 L1094 1122 M1125 1085 L1132 1110 M1100 1128 L1128 1118",
      "M0 320 Q20 340 10 370 L0 375 M0 405 Q12 420 0 435 M0 980 Q20 1000 0 1025 M700 285 L720 308 M830 308 L870 290 M1060 308 L1190 288 M1350 285 L1362 308 M60 990 L80 975 L140 978",
      "M250 1200 C260 1130 410 1130 420 1200 M485 1200 C510 1110 720 1110 745 1200 M510 1200 C540 1130 690 1130 718 1200 M580 1200 Q570 1155 605 1160 Q620 1165 615 1200 M640 1200 Q640 1170 670 1180 M1310 1165 C1340 1150 1430 1190 1440 1200",
    ],
  },
  {
    id: "monkey",
    transform: "translate(0 1210) scale(.3333)",
    dots: [
      [441, 18, 14], [928, 33, 22], [865, 60, 15], [1203, 33, 22], [1050, 490, 11], [1047, 585, 17], [1098, 639, 15],
      [1037, 657, 25], [677, 562, 15], [637, 598, 12], [707, 605, 14], [414, 722, 12], [483, 735, 22], [36, 778, 10],
      [254, 844, 31], [335, 829, 20], [400, 818, 15], [461, 823, 20], [510, 793, 12], [658, 733, 12], [735, 748, 24],
      [825, 703, 14], [272, 916, 13], [335, 928, 18], [409, 973, 15], [453, 1035, 10], [578, 1046, 11],
      [421, 1086, 23], [113, 1201, 13], [168, 1189, 19], [225, 1194, 14], [419, 1209, 17], [480, 1196, 16],
      [1220, 1020, 9], [1207, 1086, 19], [1232, 877, 18], [949, 1240, 12], [1138, 520, 15], [395, 680, 12],
      [972, 893, 4], [991, 889, 4], [1240, 695, 87],
    ],
    stars: [[625, 815, 1.2, -8]],
    paths: [
      "M0 85 L100 92 M0 128 L100 138 M100 190 C20 200 -10 260 20 320 L5 365 L45 360 Q70 380 98 375 M98 215 C40 220 20 270 40 315 L30 345 L60 340 L98 352 M98 245 Q70 240 70 265 Q75 290 98 310",
      "M75 0 C75 45 110 50 150 40 Q200 30 195 0 M150 0 Q200 5 165 38 M255 0 C265 45 300 42 330 35 Q375 25 375 0 M0 655 Q40 650 70 655",
      "M0 425 L310 450 L315 435 M0 463 L20 463 L25 485 L98 492 M0 510 L98 525 M0 558 L58 563 L50 615 L0 610 M25 622 L100 632 M30 625 L35 680 L22 720 L48 724 L50 700 L100 708 L103 730 L130 730 L133 665 L105 655",
      "M465 68 L540 10 M540 10 Q550 15 555 30 Q565 55 580 62 M610 0 L575 68 M570 -15 L540 10 M655 65 Q700 30 740 68 M735 65 Q760 20 765 50 L762 68 M1000 68 L1002 5 M1020 10 L1050 45 L1110 50 L1080 68",
      "M190 680 C190 800 350 800 350 690 M210 680 C215 770 330 770 332 680 M430 440 Q480 465 520 440 M580 458 Q620 460 665 492 M340 440 L338 460",
      "M700 440 C700 530 700 570 790 580 C820 570 850 545 852 570 C830 640 770 680 700 680 L660 665 Q620 690 540 682 M735 440 L708 450 L732 470 L705 480 L730 500 L705 515 L735 528 L710 550 L745 545 L742 572 L775 558 L778 582 L808 562 L815 575",
      "M848 517 L820 500 Q795 450 808 438 M910 438 Q920 480 848 517 M960 440 L980 446 L1010 440",
      "M930 530 Q950 505 975 530 L968 605 Q945 625 922 600 Z M905 570 Q892 560 890 580 C890 640 990 650 995 590 Q990 575 980 590 C975 635 910 630 905 570 M930 638 L925 665 Q932 678 940 662 L945 640",
      "M1140 438 L1125 480 Q1085 510 1110 545 L1118 575 Q1130 595 1145 575 L1150 560 L1242 555 M1175 438 Q1155 470 1160 485 L1242 475 M1242 738 L1225 738 L1212 660 L1242 680",
      "M850 860 C850 760 900 715 965 717 C1030 715 1060 750 1080 790 C1110 840 1120 900 1060 960 M850 860 C845 930 870 980 950 990 M925 920 C870 930 855 870 870 830 C890 800 940 800 965 825 C990 780 1060 770 1075 830 C1080 880 1060 890 1050 900 C1065 950 1040 1000 990 995 C940 990 920 960 925 920",
      "M907 860 Q910 842 928 850 Q940 870 925 885 Q905 880 907 860 M1010 835 Q1018 815 1035 825 Q1045 845 1030 858 Q1010 855 1010 835 M915 862 q8 -8 10 5 M1018 835 q8 -8 10 5 M955 936 Q990 935 1025 918 Q1025 960 985 958 Q960 952 955 936",
      "M788 850 Q790 780 820 775 Q845 780 838 830 L848 918 Q830 925 810 910 Q785 890 788 850 M815 918 L820 1050 Q840 1070 870 1064 Q895 1055 890 1040 Q860 1000 850 915 M840 790 L862 782 M1065 715 C1100 710 1150 770 1145 830 Q1130 860 1110 850 C1080 800 1060 740 1065 715 M1110 855 L1118 980 Q1140 1005 1180 990 Q1190 975 1180 950 L1145 850 M1040 742 L1065 738",
      "M0 840 L150 818 Q175 820 178 835 L190 930 Q190 945 170 950 L0 978 M0 870 L90 856 Q112 860 105 872 L0 890 M0 915 L85 902 Q108 908 98 918 L0 932",
      "M0 1018 L300 982 Q315 985 320 1000 L325 1045 L358 1075 L330 1090 Q325 1112 310 1114 L0 1152 M35 1050 L265 1022 Q285 1030 275 1040 L35 1070 Q20 1060 35 1050 M45 1095 L185 1075 Q208 1080 198 1095 L50 1112 Q35 1105 45 1095",
      "M418 883 Q500 890 585 912 Q595 918 592 930 L572 965 L515 932 Q505 945 560 980 Q555 1000 530 1022 Q520 1025 512 1018 Q450 950 415 890 Z",
      "M690 932 Q675 935 680 955 Q705 960 705 940 L695 888 L738 865 L748 925 Q730 920 730 935 Q745 945 748 925 M697 905 L743 885",
      "M570 1245 L635 1010 Q640 995 660 1000 L740 1035 Q758 1045 750 1060 L680 1245 M615 1092 Q670 1095 720 1130 M597 1162 Q650 1165 692 1198 M575 1225 Q620 1210 665 1245 M670 1005 L655 1030 M690 1015 L678 1040 M712 1025 L700 1048 M732 1038 L722 1060",
      "M215 1245 L520 1112 Q530 1112 528 1125 L510 1245 M265 1245 Q300 1225 340 1245 M0 1245 L25 1205 Q35 1195 35 1245",
      "M785 1225 Q745 1210 752 1180 Q760 1155 785 1160 Q790 1120 835 1110 Q875 1115 882 1142 Q915 1145 908 1175 Q895 1215 840 1222 Z",
      "M968 1165 Q960 1180 980 1182 C1040 1170 1030 1130 1050 1090 Q1070 1050 1090 1045 L1090 1060 L1115 1028 L1062 1012 L1068 1028 C1020 1060 1020 1100 1010 1130 Q1000 1155 968 1165 M940 1080 Q935 1095 945 1102 Q980 1095 1005 1100 M940 1080 Q970 1070 1012 1078 M1050 1115 Q1080 1130 1098 1115 L1098 1095 L1145 1108 L1115 1152 L1105 1135 L1045 1135",
      "M1032 1245 L1030 1225 L1125 1192 L1180 1225 L1190 1245 M1125 1192 L1145 1240 L1175 1225",
    ],
  },
  {
    id: "bottom-right",
    transform: "translate(414 1430) scale(.3333)",
    dots: [
      [475, 30, 20], [657, 62, 12], [712, 61, 15], [931, 11, 11], [1191, 26, 12], [91, 137, 14], [40, 175, 14],
      [100, 222, 23], [158, 230, 9], [46, 244, 12], [14, 456, 16], [32, 573, 29], [412, 580, 16], [461, 562, 11],
      [540, 90, 9], [1206, 378, 24], [1221, 561, 8], [0, 218, 8],
    ],
    paths: [
      "M132 60 C135 -15 200 -75 264 -75 C340 -75 395 0 396 60 C395 90 390 98 385 105 M132 60 C135 120 170 180 215 185 M264 60 L200 30 Q175 20 162 40 Q155 75 175 85 Q190 88 264 60 M264 60 Q205 0 225 -15 Q245 -30 255 -25 Q270 -10 264 60 Q265 -20 280 -25 Q310 -25 315 -5 Q310 20 264 60 L345 20 Q370 40 372 65 Q370 85 350 85 L264 60 M264 60 L305 98 M264 60 L270 98 M264 60 Q215 110 205 130 Q180 110 185 95 Z",
      "M80 0 C90 70 50 115 0 122 M0 65 L28 40 Q35 30 30 20 L0 0",
      "M520 0 Q530 20 560 22 L650 0 M570 30 Q560 45 580 45 L750 0 M930 98 L985 0 M1060 0 C1080 25 1110 40 1122 28 Q1120 10 1090 0 M1115 45 L1098 68 M1070 98 Q1060 65 1100 65 Q1135 75 1128 105",
      "M730 98 Q760 60 800 60 Q830 20 865 25 Q890 40 885 98 M810 58 Q840 40 860 70 L870 98 M450 98 L478 75 L495 95 M1242 80 Q1230 130 1242 160 M1140 185 C1170 160 1195 210 1175 260 M1242 210 L1215 270 Q1225 285 1242 275",
      "M38 330 Q35 305 55 300 L220 270 M50 330 Q50 315 70 312 L220 285 M38 330 L110 570 M50 330 L125 580 M285 320 L328 530 Q330 540 310 545 L130 582 M328 528 L345 538 L480 500",
      "M125 372 L210 350 Q228 355 218 368 L130 388 Q112 382 125 372 M340 362 L455 328 Q472 335 460 345 L345 374 Q328 370 340 362 M345 405 L455 378 M350 418 L460 395 M345 405 Q330 412 350 418 M360 455 L425 440 Q438 448 425 458 L365 470 Q345 465 360 455",
      "M180 450 Q172 422 190 422 Q208 425 203 448 Q230 435 236 450 Q240 468 215 470 Q235 490 228 500 Q210 510 200 488 Q185 515 168 505 Q155 490 172 478 Q145 480 145 463 Q150 448 180 450",
      "M1175 585 L1200 460 L1242 480 M1185 535 L1242 540 M550 585 L600 568 M565 585 L585 560 M725 585 Q740 570 765 568 M920 568 L930 585 M340 325 L350 330 M515 570 L530 582",
    ],
  },
];

function Wallpaper() {
  return (
    <svg
      className="absolute inset-0 h-[1441px] w-[828px]"
      viewBox="0 184 828 1441"
      fill="none"
      stroke="url(#doodle-ink)"
      strokeLinecap="round"
      strokeLinejoin="round"
    >
      <defs>
        <linearGradient id="doodle-ink" gradientUnits="userSpaceOnUse" x1="0" y1="0" x2="0" y2="1200">
          <stop offset="0" stopColor="#b0afa9" />
          <stop offset="1" stopColor="#b1aca5" />
        </linearGradient>
        {/* Keeps the patches from drawing over each other */}
        <clipPath id="clip-top-left"><path d="M0 184H408V280H0Z" /></clipPath>
        <clipPath id="clip-top-right"><path d="M530 184H828V280H530Z" /></clipPath>
        <clipPath id="clip-left"><path d="M0 280H395V535H0Z" /></clipPath>
        <clipPath id="clip-middle"><path d="M408 184H530V280H520V380H480V450H560V570H414V535H395V280H408Z" /></clipPath>
        <clipPath id="clip-bicycle"><path d="M520 280H828V709H414V570H560V450H480V380H520Z" /></clipPath>
        <clipPath id="clip-center-left"><path d="M0 535H414V709H513V1024H0Z" /></clipPath>
        <clipPath id="clip-octopus"><path d="M513 709H828V1051H483V1024H513Z" /></clipPath>
        <clipPath id="clip-puppy"><path d="M0 1024H389V1233H0Z" /></clipPath>
        <clipPath id="clip-right-lower"><path d="M389 1024H483V1051H828V1430H414V1355H389Z" /></clipPath>
        <clipPath id="clip-monkey"><path d="M0 1233H389V1355H414V1625H0Z" /></clipPath>
        <clipPath id="clip-bottom-right"><path d="M414 1430H828V1625H414Z" /></clipPath>
      </defs>
      {patches.map((patch) => (
        <g key={patch.id} clipPath={`url(#clip-${patch.id})`}>
          <g transform={patch.transform} strokeWidth="5.8">
            {patch.dots.map(([cx, cy, r], i) => (
              <circle key={i} cx={cx} cy={cy} r={r} />
            ))}
            {patch.stars?.map(([x, y, s, a], i) => (
              <path key={i} d={STAR} transform={`translate(${x} ${y}) rotate(${a}) scale(${s})`} />
            ))}
            {patch.paths.map((d, i) => (
              <path key={i} d={d} />
            ))}
          </g>
        </g>
      ))}
    </svg>
  );
}

function Ticks() {
  return (
    <svg
      className="h-5 w-[30px]"
      viewBox="0 0 30 20"
      fill="none"
      stroke="#53bdeb"
      strokeWidth="2.7"
      strokeLinecap="round"
      strokeLinejoin="round"
    >
      <path d="M1.5 13.2 6.6 18.4 20.8 1.6M13.7 17.2 15.6 18.4 28.7 1.6" />
    </svg>
  );
}

function Tail({ outgoing }: { outgoing?: boolean }) {
  return (
    <svg
      className={clsx(
        "absolute bottom-0 h-11 w-6",
        outgoing ? "-right-3 -scale-x-100 text-[#144d37]" : "-left-3 text-[#242625]"
      )}
      viewBox="0 0 24 44"
      fill="currentColor"
    >
      <path d="M12 0C12 20 9 33 .4 42.4C-.2 43.4 0 44 1 44C8 43.8 14.500 42 19.800 38L24 20V0Z" />
    </svg>
  );
}

type BubbleProps = {
  time: string;
  className: string;
  outgoing?: boolean;
  tail?: boolean;
  children?: React.ReactNode;
  quote?: React.ReactNode;
};

function Bubble({ time, className, outgoing, tail, children, quote }: BubbleProps) {
  return (
    <div
      className={clsx(
        "relative flex shrink-0 flex-col rounded-[24px] text-white",
        outgoing ? "self-end bg-[#144d37]" : "self-start bg-[#242625]",
        className
      )}
    >
      {tail && <Tail outgoing={outgoing} />}
      {quote}
      <div className="relative flex min-h-0 flex-1 justify-between pr-[19px] pb-3 pl-[19px]">
        <p className="pt-2.5 text-[32px] leading-[48px] whitespace-nowrap">{children}</p>
        <div className="flex items-end gap-[7px] self-end">
          <span
            className={clsx(
              "text-[23.5px] leading-6 tracking-[0.2px]",
              outgoing ? "text-[#9bb3a8]" : "text-[#9c9d9c]"
            )}
          >
            {time}
          </span>
          {outgoing && (
            <span className="pb-[3px]">
              <Ticks />
            </span>
          )}
        </div>
      </div>
    </div>
  );
}

function Heart() {
  return (
    <svg className="relative mt-[53px] mr-3.5 h-[107px] w-[107px] shrink-0 self-end" viewBox="0 0 320 320">
      <defs>
        <radialGradient id="heart-body" cx="0.52" cy="0.42" r="0.62">
          <stop offset="0" stopColor="#ff3b2f" />
          <stop offset="0.6" stopColor="#fb2a1e" />
          <stop offset="0.85" stopColor="#dd160b" />
          <stop offset="1" stopColor="#a80a02" />
        </radialGradient>
        <linearGradient id="heart-shine" x1="0" y1="0" x2="0" y2="1">
          <stop offset="0" stopColor="#fff" />
          <stop offset="0.25" stopColor="#ffc9c4" stopOpacity="0.8" />
          <stop offset="1" stopColor="#ff4438" stopOpacity="0" />
        </linearGradient>
        <filter id="heart-soft">
          <feGaussianBlur stdDeviation="4" />
        </filter>
        <clipPath id="heart-clip">
          <path d="M160 56C142 18 112 0 78 0C34 0 0 36 0 84C0 170 84 240 160 320C236 240 319 170 319 84C319 36 285 0 241 0C207 0 178 18 160 56Z" />
        </clipPath>
      </defs>
      <g clipPath="url(#heart-clip)">
        <path d="M0 0H320V320H0Z" fill="#d3160a" />
        <path
          d="M160 82C142 36 112 14 78 14C42 14 14 46 14 86C14 160 90 232 160 302C230 232 305 160 305 86C305 46 277 14 241 14C207 14 178 36 160 82Z"
          fill="url(#heart-body)"
          filter="url(#heart-soft)"
        />
        <path d="M18 105C14 40 44 15 80 15C118 17 138 44 154 76C150 110 60 100 18 105Z" fill="url(#heart-shine)" filter="url(#heart-soft)" />
        <path d="M302 105C306 40 276 15 240 15C202 17 182 44 166 76C170 110 260 100 302 105Z" fill="url(#heart-shine)" filter="url(#heart-soft)" />
      </g>
    </svg>
  );
}

function StatusBar() {
  return (
    <div className="flex h-[100px] items-center justify-between pr-[34px] pl-[57px]">
      <span className="text-[32px] leading-10 font-semibold tracking-[-0.4px]">04:48</span>
      <div className="flex items-center">
        <svg className="h-6 w-[38px]" viewBox="0 0 38 24" fill="#fff">
          <rect x="0" y="14" width="7" height="9.500" rx="2" />
          <rect x="10" y="10" width="7" height="13.500" rx="2" />
          <rect x="20" y="5" width="7" height="18.500" rx="2" />
          <rect x="30" y="0.500" width="7" height="23" rx="2" />
        </svg>
        <span className="w-[50px] pl-[6px] text-[23.5px] leading-6 font-medium tracking-[-1.1px]">LTE</span>
        <svg className="h-[27px] w-[53px]" viewBox="0 0 53 27" fill="none">
          <rect x="1" y="1.500" width="46.500" height="24" rx="7" stroke="#fff" strokeOpacity="0.4" strokeWidth="1.800" />
          <path d="M50 9.500Q52.800 11 52.800 13.500T50 17.700Z" fill="#fff" fillOpacity="0.45" />
          <rect x="4" y="5" width="20" height="17" rx="4" fill="#34c759" />
          <path d="M28.500 0 14.500 15.500H20.500L18.500 27 33.500 10.500H26.500Z" fill="#3a4843" stroke="#3a4843" strokeWidth="3" />
          <path d="M28 0.500 15.500 15.300H22.200L20.500 26.500 32.500 11.300H25.800Z" fill="#fff" />
        </svg>
      </div>
    </div>
  );
}

function Header() {
  return (
    <header className="h-[184px] shrink-0 bg-[radial-gradient(ellipse_380px_220px_at_560px_0px,#284137_0%,#2b4339_30%,#36483fcc_55%,#44504a66_78%,#5a595500_100%),radial-gradient(ellipse_340px_190px_at_170px_200px,#3c3c3b_0%,#3e3e3da6_45%,#3c3c3b00_100%),linear-gradient(180deg,#62615d,#595855)] text-white">
      <StatusBar />
      <div className="flex h-[84px] items-center">
        <svg className="ml-6 h-11 w-7" viewBox="0 0 28 44" fill="none" stroke="#fff" strokeWidth="5" strokeLinecap="round" strokeLinejoin="round">
          <path d="M22.500 3.500 5.500 20.300 22.500 37" />
        </svg>
        <div className="-mt-[7px] ml-[69px] flex h-[71px] w-[71px] items-center justify-center rounded-full border border-[#2f2b57] bg-[#242343]">
          <svg className="h-[25px] w-[23px]" viewBox="0 0 23 25" fill="#a78dfb">
            <ellipse cx="11.500" cy="6" rx="5.400" ry="6" />
            <path d="M0.300 22C0.300 18 4.500 14 11.500 14S22.700 18 22.700 22Q22.700 24.500 20.500 24.500H2.500Q0.300 24.500 0.300 22Z" />
          </svg>
        </div>
        <div className="ml-[23px] w-[420px]">
          <p className="text-[31px] leading-9 font-semibold">Em</p>
          <p className="pt-px pb-[3px] text-[24px] leading-8 tracking-[-0.07px] whitespace-nowrap text-[#b2b2b0]">
            lần thấy cuối: hôm nay lúc04:48
          </p>
        </div>
        <svg className="-mt-0.5 ml-3 h-9 w-[54px]" viewBox="0 0 54 36" fill="none" stroke="#fff" strokeWidth="2.600" strokeLinejoin="round">
          <rect x="1.500" y="1.500" width="37" height="32.500" rx="6" />
          <path d="M38.500 14.500 49.800 5.300Q52.200 4.300 52.200 7V28.500Q52.200 31.500 49.800 30.500L38.500 21" />
        </svg>
        <svg className="-mt-0.5 ml-[38px] h-[42px] w-[42px]" viewBox="0 0 42 42" fill="none" stroke="#fff" strokeWidth="2.600" strokeLinejoin="round">
          <path d="M2.300 11C1.200 6 4.500 1.700 8 1.500Q9.800 1.500 11 3.400L16.300 10.800Q17.300 12.500 15.600 14.200L13 17.200Q12 18.500 13 20C15.500 23.800 18.500 27.500 23.500 30Q25 30.500 26 29.300L28.200 26.600Q29.600 25.300 31.500 26.500L39 31.300Q41.300 33 39.800 35.700C38 39.500 33.500 41.300 29 40.300C14 37.500 4.500 23 2.300 11Z" />
        </svg>
      </div>
    </header>
  );
}

function Footer() {
  return (
    <footer className="flex h-[167px] shrink-0 flex-col items-center bg-[radial-gradient(ellipse_230px_130px_at_60px_160px,#4a423e_0%,#48413e80_50%,#4e464200_100%),linear-gradient(180deg,#4f4e4a00_40%,#4f4e4aa0_100%),linear-gradient(90deg,#4a4947_0%,#3a3a38_14%,#3a3a38_58%,#57544f_76%,#625e59_88%)]">
      <div className="mt-[19px] flex h-16 w-full items-center">
        <svg className="ml-[26px] h-[42px] w-[42px]" viewBox="0 0 42 42" stroke="#fff" strokeWidth="4" strokeLinecap="round">
          <path d="M21 2V38M3 20H39" />
        </svg>
        <div className="ml-[26px] flex h-16 w-[546px] items-center justify-end rounded-full border border-white/15 bg-white/10 pr-[21px]">
          <svg className="mb-[3px] h-[38px] w-[38px]" viewBox="0 0 38 38" fill="none" stroke="#fff" strokeWidth="2.600" strokeLinejoin="round">
            <path d="M36 20C36.500 10 35.500 2 22 1.500H15C5 1.500 1.500 5 1.500 15V23C1.500 33 6 36.500 14 36.500C23 37 36 26 36 20Z" />
            <path d="M20 36V30Q20 20.500 29 20.500L36 20.300" />
          </svg>
        </div>
        <svg className="mb-[2px] ml-[36px] h-[38px] w-12" viewBox="0 0 48 38" fill="none" stroke="#fff" strokeWidth="2.600" strokeLinejoin="round">
          <path d="M5 7.500H10Q12.500 7.500 14 5.500L15.500 3.500Q17 1.500 19 1.500H28Q30 1.500 31.500 3.500L33 5.500Q34.500 7.500 37 7.500H43Q46.500 7.500 46.500 11V32.500Q46.500 36.500 43 36.500H5Q1.800 36.500 1.800 32.500V11Q1.800 7.500 5 7.500Z" />
          <circle cx="24" cy="20.500" r="9.500" />
          <circle cx="37.300" cy="14" r="2.400" fill="#fff" stroke="none" />
        </svg>
        <svg className="mb-[3px] ml-[38px] h-12 w-8" viewBox="0 0 32 48" fill="none" stroke="#fff" strokeWidth="2.800" strokeLinecap="round">
          <rect x="8" y="2" width="16" height="30.500" rx="8" />
          <path d="M1.800 24.500C1.800 33.500 8 38.500 16 38.500S30.200 33.500 30.200 24.500M16 38.500V46" />
        </svg>
      </div>
      <div className="mt-[58px] h-2.5 w-[296px] rounded-full bg-[#efefef]" />
    </footer>
  );
}

export default function App() {
  return (
    <div className="h-[1792px] w-[828px] bg-white">
      <div className="flex h-full flex-col overflow-hidden rounded-[10px] font-['Inter','Liberation_Sans',sans-serif]">
        <Header />

        <main className="relative flex h-[1441px] shrink-0 flex-col overflow-hidden bg-[linear-gradient(180deg,#bdbcb7_0%,#bfbbb5_25%,#bfbab4_55%,#c1b8b2_75%,#c1b8b1_100%)] px-[33px]">
          <Wallpaper />

          <div className="relative -mt-[68px] h-[74px] w-[272px] shrink-0 rounded-[24px] bg-[#242625]" />
          <Bubble time="04:34" className="mt-2 h-[74px] w-[306px]" tail>
            Em yêu anh
          </Bubble>

          <Heart />
          <div className="relative mt-3 flex h-[54px] w-[142px] shrink-0 items-center justify-end gap-[7px] self-end rounded-[20px] bg-[#144d37] pr-[19px]">
            <span className="pt-px text-[23.5px] leading-6 tracking-[0.2px] text-[#9bb3a8]">04:34</span>
            <Ticks />
          </div>

          <Bubble time="04:34" className="mt-[37px] h-[74px] w-[394px]" tail>
            Muốn ôm một cái
          </Bubble>
          <Bubble time="04:34" className="mt-[26px] h-[74px] w-[354px]" outgoing tail>
            Muốn gì nữa
          </Bubble>

          <Bubble
            time="04:34"
            className="mt-[26px] h-52 w-[480px]"
            quote={
              <div className="mx-[7px] mt-[7px] flex h-[127px] shrink-0 overflow-hidden rounded-[16px] bg-[#1d1f1e]">
                <div className="w-2 bg-[#53bdeb]" />
                <div className="flex flex-col pt-5 pl-[18px]">
                  <p className="text-[29px] leading-10 font-semibold text-[#53bdeb]">Bạn</p>
                  <p className="pt-1.5 text-[25px] leading-10 tracking-[0.3px] text-[#c4c5c4]">Muốn em có làm đâu</p>
                </div>
              </div>
            }
          >
            Cái gì a nói e k làm đâu
          </Bubble>
          <Bubble time="04:34" className="mt-2 h-[74px] w-[450px]" tail>
            Muốn nhiều rất nhiều
          </Bubble>

          <Bubble time="04:35" className="mt-[26px] h-[74px] w-[306px]" outgoing>
            Em nói đi
          </Bubble>
          <Bubble time="04:35" className="mt-2 h-[74px] w-[406px]" outgoing tail>
            Anh muốn nghe
          </Bubble>

          <Bubble time="04:35" className="mt-[26px] h-[122px] w-[562px] [&_p]:w-[420px]">
            Muốn hôn a , muốn vuốt ve khuôn
            <br />
            mặt,cơ ngực a
          </Bubble>
          <Bubble time="04:35" className="mt-2 h-[74px] w-[170px]" tail>
            Hii
          </Bubble>

          <Bubble time="04:36" className="mt-[26px] h-[74px] w-[308px]" outgoing>
            Gì nữa vk
          </Bubble>
          <Bubble time="04:36" className="mt-2 h-[74px] w-[226px]" outgoing>
            Đấy
          </Bubble>

          {/* Jump to latest */}
          <div className="absolute right-[18px] bottom-12 flex h-16 w-16 items-center justify-center rounded-full bg-[#242625] shadow-[0_0_20px_rgba(0,0,0,0.12)]">
            <svg className="mt-1 h-[17px] w-7" viewBox="0 0 28 17" fill="none" stroke="#fff" strokeWidth="3.800" strokeLinecap="round" strokeLinejoin="round">
              <path d="M3.500 2.500 14 13.500 24.500 2.500" />
            </svg>
            <span className="absolute -top-[18px] -left-3 flex h-10 w-10 items-center justify-center rounded-full bg-[#21c063] text-[26px] leading-none text-[#0b0f0d]">
              4
            </span>
          </div>
        </main>

        <Footer />
      </div>
    </div>
  );
}
